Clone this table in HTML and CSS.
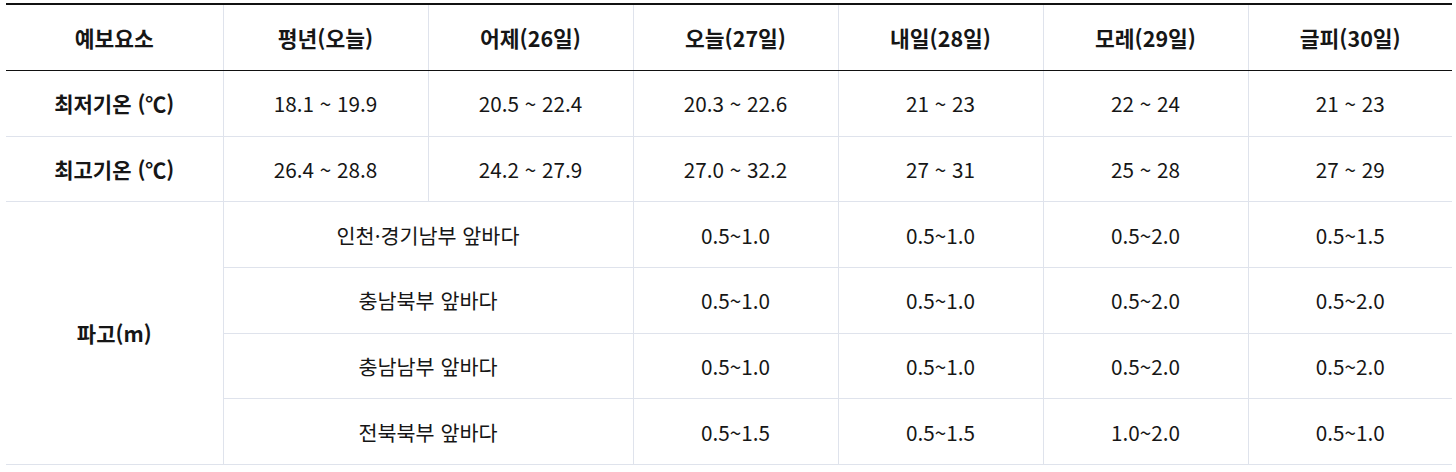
FILE: index.html
```html
<!DOCTYPE html>
<html lang="ko">
<head>
<meta charset="utf-8">
<link rel="stylesheet" href="styles.css">
</head>
<body>
<div class="wrap">
<table class="fc">
<colgroup>
<col class="c-first">
<col class="c-mid"><col class="c-mid"><col class="c-mid"><col class="c-mid"><col class="c-mid">
<col class="c-last">
</colgroup>
<thead>
<tr>
<th>예보요소</th><th>평년(오늘)</th><th>어제(26일)</th><th>오늘(27일)</th><th>내일(28일)</th><th>모레(29일)</th><th>글피(30일)</th>
</tr>
</thead>
<tbody>
<tr>
<th class="rh">최저기온 (℃)</th><td>18.1 ~ 19.9</td><td>20.5 ~ 22.4</td><td>20.3 ~ 22.6</td><td>21 ~ 23</td><td>22 ~ 24</td><td>21 ~ 23</td>
</tr>
<tr>
<th class="rh">최고기온 (℃)</th><td>26.4 ~ 28.8</td><td>24.2 ~ 27.9</td><td>27.0 ~ 32.2</td><td>27 ~ 31</td><td>25 ~ 28</td><td>27 ~ 29</td>
</tr>
<tr>
<th class="rh" rowspan="4">파고(m)</th><td colspan="2">인천·경기남부 앞바다</td><td>0.5~1.0</td><td>0.5~1.0</td><td>0.5~2.0</td><td>0.5~1.5</td>
</tr>
<tr>
<td colspan="2">충남북부 앞바다</td><td>0.5~1.0</td><td>0.5~1.0</td><td>0.5~2.0</td><td>0.5~2.0</td>
</tr>
<tr>
<td colspan="2">충남남부 앞바다</td><td>0.5~1.0</td><td>0.5~1.0</td><td>0.5~2.0</td><td>0.5~2.0</td>
</tr>
<tr>
<td colspan="2">전북북부 앞바다</td><td>0.5~1.5</td><td>0.5~1.5</td><td>1.0~2.0</td><td>0.5~1.0</td>
</tr>
</tbody>
</table>
</div>
</body>
</html>
```
FILE: styles.css
```css
html, body {
  margin: 0;
  padding: 0;
  background: #ffffff;
}
.wrap {
  padding: 3px 4px 0 6px;
}
.fc {
  width: 1446px;
  border-collapse: collapse;
  table-layout: fixed;
  font-family: "Noto Sans CJK KR", "Noto Sans", sans-serif;
  color: #161616;
  border-top: 2px solid #111111;
}
.c-first { width: 217px; }
.c-mid { width: 205px; }
.c-last { width: 204px; }
.fc th, .fc td {
  border: 1px solid #dfe3ec;
  text-align: center;
  vertical-align: middle;
  padding: 0;
  font-size: 20.7px;
  font-weight: 400;
  height: 64.67px;
}
.fc tr > :first-child { border-left: none; }
.fc tr > :last-child { border-right: none; }
.fc tbody tr:not(:first-child) > td:first-child { border-left: 1px solid #dfe3ec; }
.fc thead th {
  font-weight: 700;
  font-size: 21.5px;
  border-top: 2px solid #111111;
  border-bottom: 1px solid #111111;
  height: 65px;
}
.fc .rh {
  font-weight: 700;
  font-size: 21px;
}
```
